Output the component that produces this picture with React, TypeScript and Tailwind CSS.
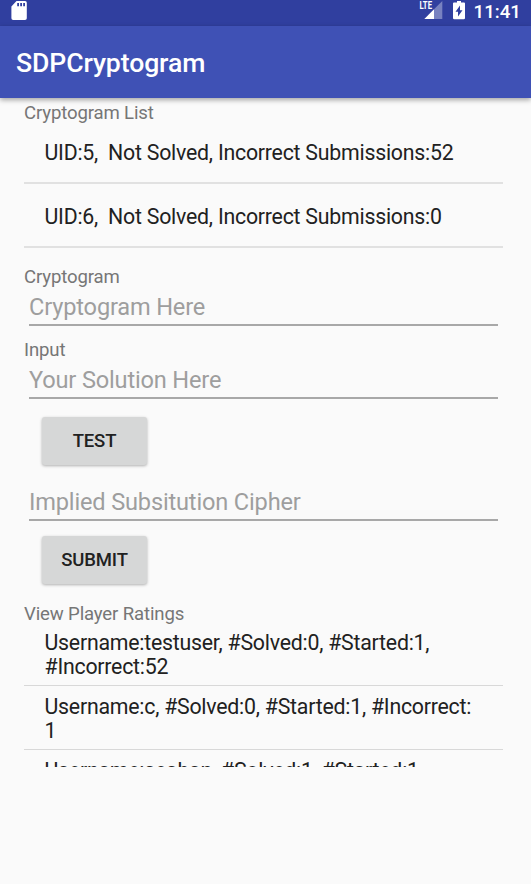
const CRYPTOGRAMS = [
  "UID:5,\u00a0 Not Solved, Incorrect Submissions:52",
  "UID:6,\u00a0 Not Solved, Incorrect Submissions:0",
];

const RATINGS = [
  ["Username:testuser, #Solved:0, #Started:1,", "#Incorrect:52"],
  ["Username:c, #Solved:0, #Started:1, #Incorrect:", "1"],
  ["Username:seaban, #Solved:1, #Started:1,"],
];

function StatusBar() {
  return (
    <div className="flex h-[26px] items-start bg-[#303f9f] text-white">
      <svg className="ml-[11px] mt-px h-5 w-4" viewBox="0 0 16 20" aria-hidden="true">
        <path
          fill="#fff"
          fillRule="evenodd"
          d="M5.5 0H14a1.800 1.800 0 0 1 1.800 1.800v15.500a1.800 1.800 0 0 1-1.800 1.800H2.200a1.800 1.800 0 0 1-1.800-1.800V5.500zM6.200 2v3.200h1.800V2zm3 0v3.200h1.800V2zm3 0v3.200h1.800V2z"
        />
      </svg>
      <div className="flex-1" />
      <svg className="h-5 w-6" viewBox="0 0 24 20" aria-hidden="true">
        <path fill="#fff" fillOpacity=".35" d="M23.300 1v18H15V9.300z" />
        <path fill="#fff" d="M15 9.300V19H5.300z" />
        <text
          x="0.500"
          y="9"
          fill="#fff"
          fontFamily="Roboto, sans-serif"
          fontSize="10.500"
          fontWeight="700"
          textLength="12.500"
          lengthAdjust="spacingAndGlyphs"
        >
          LTE
        </text>
      </svg>
      <svg className="ml-[10px] h-5 w-3" viewBox="0 0 12 20" aria-hidden="true">
        <path
          fill="#fff"
          fillRule="evenodd"
          d="M4 1h4v1.500h3a1 1 0 0 1 1 1V18a1.300 1.300 0 0 1-1.300 1.300H1.300A1.300 1.300 0 0 1 0 18V3.500a1 1 0 0 1 1-1h3zM7 5.500L2.500 11.800H5V16.500l4.500-6.300H7z"
        />
      </svg>
      <span className="ml-[9px] mr-[10px] mt-px text-[18.700px] leading-[22px] font-medium">11:41</span>
    </div>
  );
}

function Label({ children }: { children: string }) {
  return (
    <div className="h-[22px] text-[18.600px] leading-[22px] tracking-[-0.15px] text-[#767676]">
      {children}
    </div>
  );
}

function Field({ hint }: { hint: string }) {
  return (
    <div className="mx-[5px] h-[38px] border-b-2 border-[#a8a8a8] text-[23.600px] leading-[38px] tracking-[-0.17px] text-[#9e9e9e]">
      {hint}
    </div>
  );
}

function Button({ children }: { children: string }) {
  return (
    <button className="ml-[18px] block h-12 w-[105px] rounded-[3px] bg-[#d6d7d7] pt-[2px] text-[18.500px] font-medium tracking-[-0.15px] text-[#212121] shadow-[0_1px_3px_rgba(0,0,0,0.3)]">
      {children}
    </button>
  );
}

export default function App() {
  return (
    <div className="h-[884px] w-[531px] overflow-hidden bg-[#fafafa] font-['Roboto',sans-serif]">
      <StatusBar />
      <header className="relative flex h-[72px] items-center bg-[#3f51b5] pl-4 pt-[2px] text-[26.600px] font-medium tracking-[-0.1px] text-white shadow-[0_2px_5px_rgba(0,0,0,0.35)]">
        SDPCryptogram
      </header>
      <main className="px-6 pr-7 pt-[4px]">
        <Label>Cryptogram List</Label>
        <div className="mt-[-4px] text-[21.300px] tracking-[-0.23px] text-[#212121]">
          {CRYPTOGRAMS.map((text) => (
            <div
              key={text}
              className="h-16 border-b-2 border-[#e1e1e1] pl-[20.500px] leading-[66px] whitespace-nowrap"
            >
              {text}
            </div>
          ))}
        </div>
        <div className="pt-[18px]">
          <Label>Cryptogram</Label>
        </div>
        <Field hint="Cryptogram Here" />
        <div className="pt-[13px]">
          <Label>Input</Label>
        </div>
        <Field hint="Your Solution Here" />
        <div className="pt-[18px] pb-[18px]">
          <Button>TEST</Button>
        </div>
        <Field hint="Implied Subsitution Cipher" />
        <div className="pt-[15px] pb-[19px]">
          <Button>SUBMIT</Button>
        </div>
        <Label>View Player Ratings</Label>
        <div className="h-[142px] overflow-hidden text-[21.300px] leading-[24px] tracking-[-0.23px] text-[#212121]">
          {RATINGS.map((lines, index) => (
            <div
              key={lines[0]}
              className={
                index === 0
                  ? "h-[61px] border-b border-[#d8d8d8] pt-[6px] pl-[20.500px] whitespace-nowrap"
                  : "h-16 border-b border-[#d8d8d8] pt-[9px] pl-[20.500px] whitespace-nowrap"
              }
            >
              {lines.map((line) => (
                <div key={line}>{line}</div>
              ))}
            </div>
          ))}
        </div>
      </main>
    </div>
  );
}
